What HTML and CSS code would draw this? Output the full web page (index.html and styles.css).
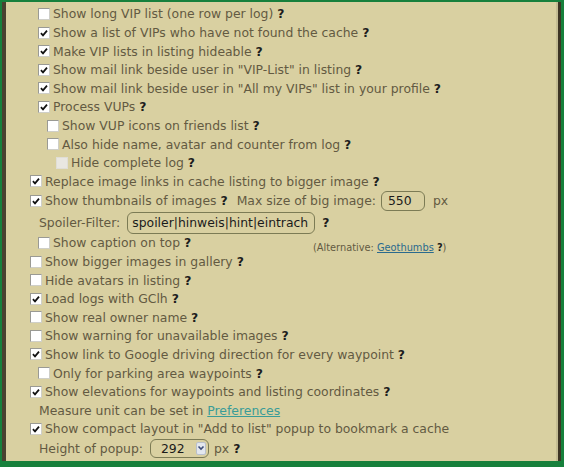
FILE: index.html
```html
<!DOCTYPE html>
<html>
<head>
<meta charset="utf-8">
<link rel="stylesheet" href="styles.css">
</head>
<body>
<div class="panel">
  <div class="row l1"><span class="cb"></span><span class="lbl">Show long VIP list (one row per log) <b class="q">?</b></span></div>
  <div class="row l1"><span class="cb on"><svg viewBox="0 0 12 12"><path d="M2.3 6.2 L4.8 8.8 L9.6 3.2"/></svg></span><span class="lbl">Show a list of VIPs who have not found the cache <b class="q">?</b></span></div>
  <div class="row l1"><span class="cb on"><svg viewBox="0 0 12 12"><path d="M2.3 6.2 L4.8 8.8 L9.6 3.2"/></svg></span><span class="lbl">Make VIP lists in listing hideable <b class="q">?</b></span></div>
  <div class="row l1"><span class="cb on"><svg viewBox="0 0 12 12"><path d="M2.3 6.2 L4.8 8.8 L9.6 3.2"/></svg></span><span class="lbl">Show mail link beside user in "VIP-List" in listing <b class="q">?</b></span></div>
  <div class="row l1"><span class="cb on"><svg viewBox="0 0 12 12"><path d="M2.3 6.2 L4.8 8.8 L9.6 3.2"/></svg></span><span class="lbl">Show mail link beside user in "All my VIPs" list in your profile <b class="q">?</b></span></div>
  <div class="row l1"><span class="cb on"><svg viewBox="0 0 12 12"><path d="M2.3 6.2 L4.8 8.8 L9.6 3.2"/></svg></span><span class="lbl">Process VUPs <b class="q">?</b></span></div>
  <div class="row l2"><span class="cb"></span><span class="lbl">Show VUP icons on friends list <b class="q">?</b></span></div>
  <div class="row l2"><span class="cb"></span><span class="lbl">Also hide name, avatar and counter from log <b class="q">?</b></span></div>
  <div class="row l3"><span class="cb dis"></span><span class="lbl">Hide complete log <b class="q">?</b></span></div>
  <div class="row l0"><span class="cb on"><svg viewBox="0 0 12 12"><path d="M2.3 6.2 L4.8 8.8 L9.6 3.2"/></svg></span><span class="lbl">Replace image links in cache listing to bigger image <b class="q">?</b></span></div>
  <div class="row l0 tall"><span class="cb on"><svg viewBox="0 0 12 12"><path d="M2.3 6.2 L4.8 8.8 L9.6 3.2"/></svg></span><span class="lbl">Show thumbnails of images <b class="q">?</b></span><span class="lbl gapl">Max size of big image:</span><input class="field num" type="text" value="550"><span class="lbl unit">px</span></div>
  <div class="row txt spoil"><span class="lbl">Spoiler-Filter:</span><input class="field filter" type="text" value="spoiler|hinweis|hint|eintrach"><b class="q qs">?</b></div>
  <div class="row l1 cap"><span class="capl"><span class="cb"></span><span class="lbl">Show caption on top <b class="q">?</b></span></span><span class="alt">(Alternative: <a href="#" class="geo">Geothumbs</a> <b class="q">?</b>)</span></div>
  <div class="row l0"><span class="cb"></span><span class="lbl">Show bigger images in gallery <b class="q">?</b></span></div>
  <div class="row l0"><span class="cb"></span><span class="lbl">Hide avatars in listing <b class="q">?</b></span></div>
  <div class="row l0"><span class="cb on"><svg viewBox="0 0 12 12"><path d="M2.3 6.2 L4.8 8.8 L9.6 3.2"/></svg></span><span class="lbl">Load logs with GClh <b class="q">?</b></span></div>
  <div class="row l0"><span class="cb"></span><span class="lbl">Show real owner name <b class="q">?</b></span></div>
  <div class="row l0"><span class="cb"></span><span class="lbl">Show warning for unavailable images <b class="q">?</b></span></div>
  <div class="row l0"><span class="cb on"><svg viewBox="0 0 12 12"><path d="M2.3 6.2 L4.8 8.8 L9.6 3.2"/></svg></span><span class="lbl">Show link to Google driving direction for every waypoint <b class="q">?</b></span></div>
  <div class="row l1"><span class="cb"></span><span class="lbl">Only for parking area waypoints <b class="q">?</b></span></div>
  <div class="row l0"><span class="cb on"><svg viewBox="0 0 12 12"><path d="M2.3 6.2 L4.8 8.8 L9.6 3.2"/></svg></span><span class="lbl">Show elevations for waypoints and listing coordinates <b class="q">?</b></span></div>
  <div class="row txt"><span class="lbl">Measure unit can be set in <a href="#" class="pref">Preferences</a></span></div>
  <div class="row l0"><span class="cb on"><svg viewBox="0 0 12 12"><path d="M2.3 6.2 L4.8 8.8 L9.6 3.2"/></svg></span><span class="lbl">Show compact layout in "Add to list" popup to bookmark a cache</span></div>
  <div class="row txt sel-row"><span class="lbl">Height of popup:</span><span class="select"><span class="sv">292</span><span class="arrow"><svg viewBox="0 0 8 10"><path d="M1.5 3.5 L4 6 L6.5 3.5"/></svg></span></span><span class="lbl unit2">px <b class="q">?</b></span></div>
</div>
</body>
</html>
```
FILE: styles.css
```css
html {
  background: #17803c;
}
body {
  margin: 0;
  padding: 2px 3px 0 2px;
  background: #17803c;
}
.panel {
  box-sizing: border-box;
  height: 459px;
  overflow: hidden;
  background: #d9d0a1;
  border-left: 4px solid #4a4130;
  border-right: 3px solid #3e3525;
  box-shadow: inset -2px 0 0 #c4bc93;
  padding-top: 2.7px;
  font-family: "DejaVu Sans", Verdana, sans-serif;
  font-size: 12.4px;
  color: #635a42;
  display: flex;
  flex-direction: column;
}
.row {
  display: flex;
  align-items: center;
  height: 18.6px;
  white-space: nowrap;
}
.l0 { padding-left: 24px; }
.l1 { padding-left: 32px; }
.l2 { padding-left: 41px; }
.l3 { padding-left: 50px; }
.txt { padding-left: 33px; }
.cb {
  box-sizing: border-box;
  width: 12px;
  height: 12px;
  flex: none;
  background: #fff;
  border: 1px solid #9a9a94;
  border-right-color: #cfcfc8;
  border-bottom-color: #cfcfc8;
  margin-right: 3px;
  display: flex;
}
.cb svg {
  width: 10px;
  height: 10px;
}
.cb svg path {
  fill: none;
  stroke: #111;
  stroke-width: 2.1;
}
.cb.dis {
  background: #e9e7e1;
  border-color: #e0ded6;
}
.q {
  color: #1d1d1d;
  font-weight: bold;
}
.tall { height: 20px; }
.gapl { margin-left: 9px; }
.field {
  box-sizing: border-box;
  font-family: "DejaVu Sans", Verdana, sans-serif;
  font-size: 12.4px;
  color: #1b1b1b;
  background: #d9d0a1;
  border: 1.5px solid #7c7b55;
  border-radius: 6px;
  outline: none;
  padding: 0 4px;
}
.num {
  width: 44px;
  height: 20px;
  margin-left: 5px;
  padding-left: 6px;
}
.unit { margin-left: 8px; }
.spoil { height: 23px; }
.filter {
  width: 188px;
  height: 22px;
  margin-left: 7px;
  margin-top: 1px;
  padding-left: 4px;
}
.qs { margin-left: 7px; }
.cap { align-items: center; }
.capl {
  display: flex;
  align-items: center;
  width: 275px;
}
.alt {
  font-size: 9.8px;
  align-self: flex-end;
  margin-bottom: -1px;
}
.geo {
  color: #2a6a8e;
}
.pref {
  color: #3a9c98;
}
.sel-row { height: 20px; }
.select {
  box-sizing: border-box;
  display: flex;
  align-items: center;
  width: 59px;
  height: 19px;
  margin-left: 7px;
  border: 1.5px solid #7c7b55;
  border-radius: 6px;
  color: #1b1b1b;
  padding-left: 10px;
}
.sv { flex: 1; }
.arrow {
  box-sizing: border-box;
  width: 10px;
  height: 13px;
  background: #e3e7ee;
  border: 1px solid #b9c0cc;
  border-radius: 2px;
  margin-right: 2px;
  display: flex;
  align-items: center;
  justify-content: center;
}
.arrow svg {
  width: 8px;
  height: 10px;
}
.arrow path {
  fill: none;
  stroke: #3d4d78;
  stroke-width: 1.6;
}
.unit2 { margin-left: 5px; }
```
